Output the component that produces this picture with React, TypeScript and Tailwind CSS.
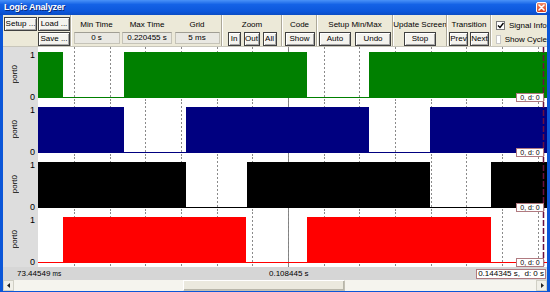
import React from "react";

const FONT = "font-['Liberation_Sans',Arial,sans-serif]";

function Btn({ children, className }: { children: React.ReactNode; className: string }) {
  return (
    <div
      className={
        "flex items-center justify-center h-[14px] bg-[#f4f3ee] border border-[#404040] shadow-[inset_1px_1px_0_#ffffff,inset_-1px_-1px_0_#a8a8a8] text-[8px] leading-none text-black whitespace-nowrap " +
        className
      }
    >
      {children}
    </div>
  );
}

function Sep() {
  return <div className="w-[2px] self-stretch border-l border-[#aca899] border-r border-r-white" />;
}

function Label({ children }: { children: React.ReactNode }) {
  return <div className="h-[17px] flex items-center text-[8px] leading-none pt-[3px] whitespace-nowrap">{children}</div>;
}

function ValueGroup({ label, value, w, boxW }: { label: string; value: string; w: string; boxW: string }) {
  return (
    <div className={"flex flex-col items-center " + w}>
      <Label>{label}</Label>
      <div
        className={
          "h-[12px] flex items-center justify-center text-[8px] leading-none bg-[#e9e8e2] border border-[#c5c3b8] border-t-[#a09e94] " +
          boxW
        }
      >
        {value}
      </div>
    </div>
  );
}

const W = 509;
const GRID = Array.from({ length: 14 }, (_, k) => 0.3 + 35.67 * (k + 1));

type Row = { color: string; segs: [number, number][] };
const ROWS: Row[] = [
  { color: "#008000", segs: [[38, 63], [124, 307], [369, 547]] },
  { color: "#000080", segs: [[38, 124], [186, 369], [430, 547]] },
  { color: "#000000", segs: [[38, 186], [247, 430], [491, 547]] },
  { color: "#ff0000", segs: [[63, 246], [307, 491]] },
];

function Channel({ row }: { row: Row }) {
  return (
    <div className="flex h-[55px]">
      <div className="w-[35px] bg-[#dddddd] flex">
        <div className="w-[24px] flex items-center justify-center">
          <span className="[writing-mode:vertical-rl] rotate-180 text-[8px] leading-none">port0</span>
        </div>
        <div className="flex-1 flex flex-col justify-between items-end pr-[3px] pt-[3px] pb-[0px] text-[9px] leading-[10px]">
          <span>1</span>
          <span>0</span>
        </div>
      </div>
      <svg width={W} height={55} className="block bg-white">
        <line x1={250.5} y1={0} x2={250.5} y2={55} stroke="#808080" strokeWidth={1} />
        {GRID.map((x, i) => (
          <line key={i} x1={Math.round(x) + 0.5} y1={0} x2={Math.round(x) + 0.5} y2={55} stroke="#8a8a8a" strokeWidth={1} strokeDasharray="2 2" />
        ))}
        <line x1={0} y1={50.5} x2={W} y2={50.5} stroke={row.color} strokeWidth={1} />
        {row.segs.map(([a, b], i) => (
          <rect key={i} x={a - 38} y={5} width={b - a} height={46} fill={row.color} />
        ))}
        <line x1={505.5} y1={0} x2={505.5} y2={55} stroke="#6a1040" strokeWidth={1.5} strokeDasharray="6 2" />
        <rect x={478.5} y={46.5} width={27} height={8} fill="#ffffff" stroke="#b07a80" strokeWidth={1} />
        <text x={492} y={53.3} textAnchor="middle" fontSize={7} fontFamily="Liberation Sans, Arial, sans-serif" fill="#000">
          0,  d: 0
        </text>
      </svg>
    </div>
  );
}

export default function App() {
  return (
    <div className={"w-[550px] h-[292px] bg-[#0b56d8] flex flex-col overflow-hidden text-black " + FONT}>
      {/* title bar */}
      <div className="h-[15px] flex items-center justify-between pl-[4px] pr-[3px] bg-[linear-gradient(#4a92f8,#1462e6_30%,#0c57dc_75%,#0a4cc4)]">
        <span className="text-white font-bold text-[9px] leading-none tracking-[-0.2px] [text-shadow:1px_1px_0_#0a2a7a]">
          Logic Analyzer
        </span>
        <div className="w-[11px] h-[11px] rounded-[2px] border border-white bg-[linear-gradient(#f08a6a,#d8401c)] flex items-center justify-center">
          <svg width="7" height="7" viewBox="0 0 7 7">
            <path d="M1 1 L6 6 M6 1 L1 6" stroke="#fff" strokeWidth="1.6" strokeLinecap="round" />
          </svg>
        </div>
      </div>

      <div className="flex-1 flex flex-col mx-[3px] mb-[1px] bg-[#ece9d8]">
        {/* toolbar */}
        <div className="h-[32px] flex bg-[#ece9d8] border-b border-[#c8c6bb]">
          <div className="w-[67px] flex flex-col pt-[2px] pl-[1px]">
            <div className="flex gap-[1px]">
              <Btn className="w-[33px]">Setup ...</Btn>
              <Btn className="w-[32px]">Load ...</Btn>
            </div>
            <div className="flex pl-[34px] pt-[1px]">
              <Btn className="w-[32px] h-[12px]">Save ...</Btn>
            </div>
          </div>
          <Sep />
          <ValueGroup label="Min Time" value="0 s" w="w-[49px]" boxW="w-[46px]" />
          <ValueGroup label="Max Time" value="0.220455 s" w="w-[52px]" boxW="w-[50px]" />
          <ValueGroup label="Grid" value="5 ms" w="w-[48px]" boxW="w-[45px]" />
          <Sep />
          <div className="w-[58px] flex flex-col items-center">
            <Label>Zoom</Label>
            <div className="flex gap-[3px]">
              <Btn className="w-[13px]">In</Btn>
              <Btn className="w-[16px]">Out</Btn>
              <Btn className="w-[14px]">All</Btn>
            </div>
          </div>
          <Sep />
          <div className="w-[33px] flex flex-col items-center">
            <Label>Code</Label>
            <Btn className="w-[30px]">Show</Btn>
          </div>
          <Sep />
          <div className="w-[74px] flex flex-col items-center">
            <Label>Setup Min/Max</Label>
            <div className="flex gap-[4px]">
              <Btn className="w-[32px]">Auto</Btn>
              <Btn className="w-[36px]">Undo</Btn>
            </div>
          </div>
          <Sep />
          <div className="w-[52px] flex flex-col items-center">
            <Label>Update Screen</Label>
            <Btn className="w-[32px]">Stop</Btn>
          </div>
          <Sep />
          <div className="w-[42px] flex flex-col items-center">
            <Label>Transition</Label>
            <div className="flex gap-[2px]">
              <Btn className="w-[19px]">Prev</Btn>
              <Btn className="w-[19px]">Next</Btn>
            </div>
          </div>
          <Sep />
          <div className="flex-1 flex flex-col pl-[4px] pt-[6px] gap-[5px] overflow-hidden whitespace-nowrap">
            <div className="flex items-center gap-[4px] h-[9px]">
              <div className="w-[9px] h-[9px] bg-white border border-[#7a7a7a] flex items-center justify-center">
                <svg width="7" height="7" viewBox="0 0 7 7">
                  <path d="M1 3.5 L3 5.5 L6.5 1" stroke="#000" strokeWidth="1.4" fill="none" />
                </svg>
              </div>
              <span className="text-[8px] leading-none">Signal Info</span>
            </div>
            <div className="flex items-center gap-[4px] h-[9px]">
              <div className="w-[9px] h-[9px] bg-white border border-[#c8c8c8]" />
              <span className="text-[8px] leading-none">Show Cycle</span>
            </div>
          </div>
        </div>

        {/* channels */}
        <div className="flex flex-col">
          {ROWS.map((r, i) => (
            <Channel key={i} row={r} />
          ))}
        </div>

        {/* time bar */}
        <div className="relative h-[13px] bg-[#d6d6d6] flex items-center text-[8px] leading-none">
          <span className="pl-[14px]">
            73.44549 <span className="text-[6.5px]">ms</span>
          </span>
          <span className="absolute left-[266px] top-[3px]">0.108445 s</span>
          <span className="ml-auto mr-[1px] h-[10px] px-[1px] flex items-center bg-white border border-[#b07a80] text-[8px]">
            0.144345 s,&nbsp; d: 0 s
          </span>
        </div>

        {/* scrollbar */}
        <div className="h-[11px] flex bg-[#f5f4ee]">
          <div className="w-[11px] h-[11px] bg-[#f0efe8] border border-[#d0cfc5] flex items-center justify-center">
            <svg width="4" height="5" viewBox="0 0 4 5">
              <path d="M3 0 L0 2.5 L3 5 Z" fill="#222" />
            </svg>
          </div>
          <div className="flex-1 flex">
            <div className="ml-[169px] w-[162px] h-[11px] bg-[#ebe9de] border border-[#c2c0b4] border-t-white border-l-white shadow-[inset_-1px_-1px_0_#b8b6aa]" />
          </div>
          <div className="w-[11px] h-[11px] bg-[#f0efe8] border border-[#d0cfc5] flex items-center justify-center">
            <svg width="4" height="5" viewBox="0 0 4 5">
              <path d="M1 0 L4 2.5 L1 5 Z" fill="#222" />
            </svg>
          </div>
        </div>
      </div>
    </div>
  );
}
